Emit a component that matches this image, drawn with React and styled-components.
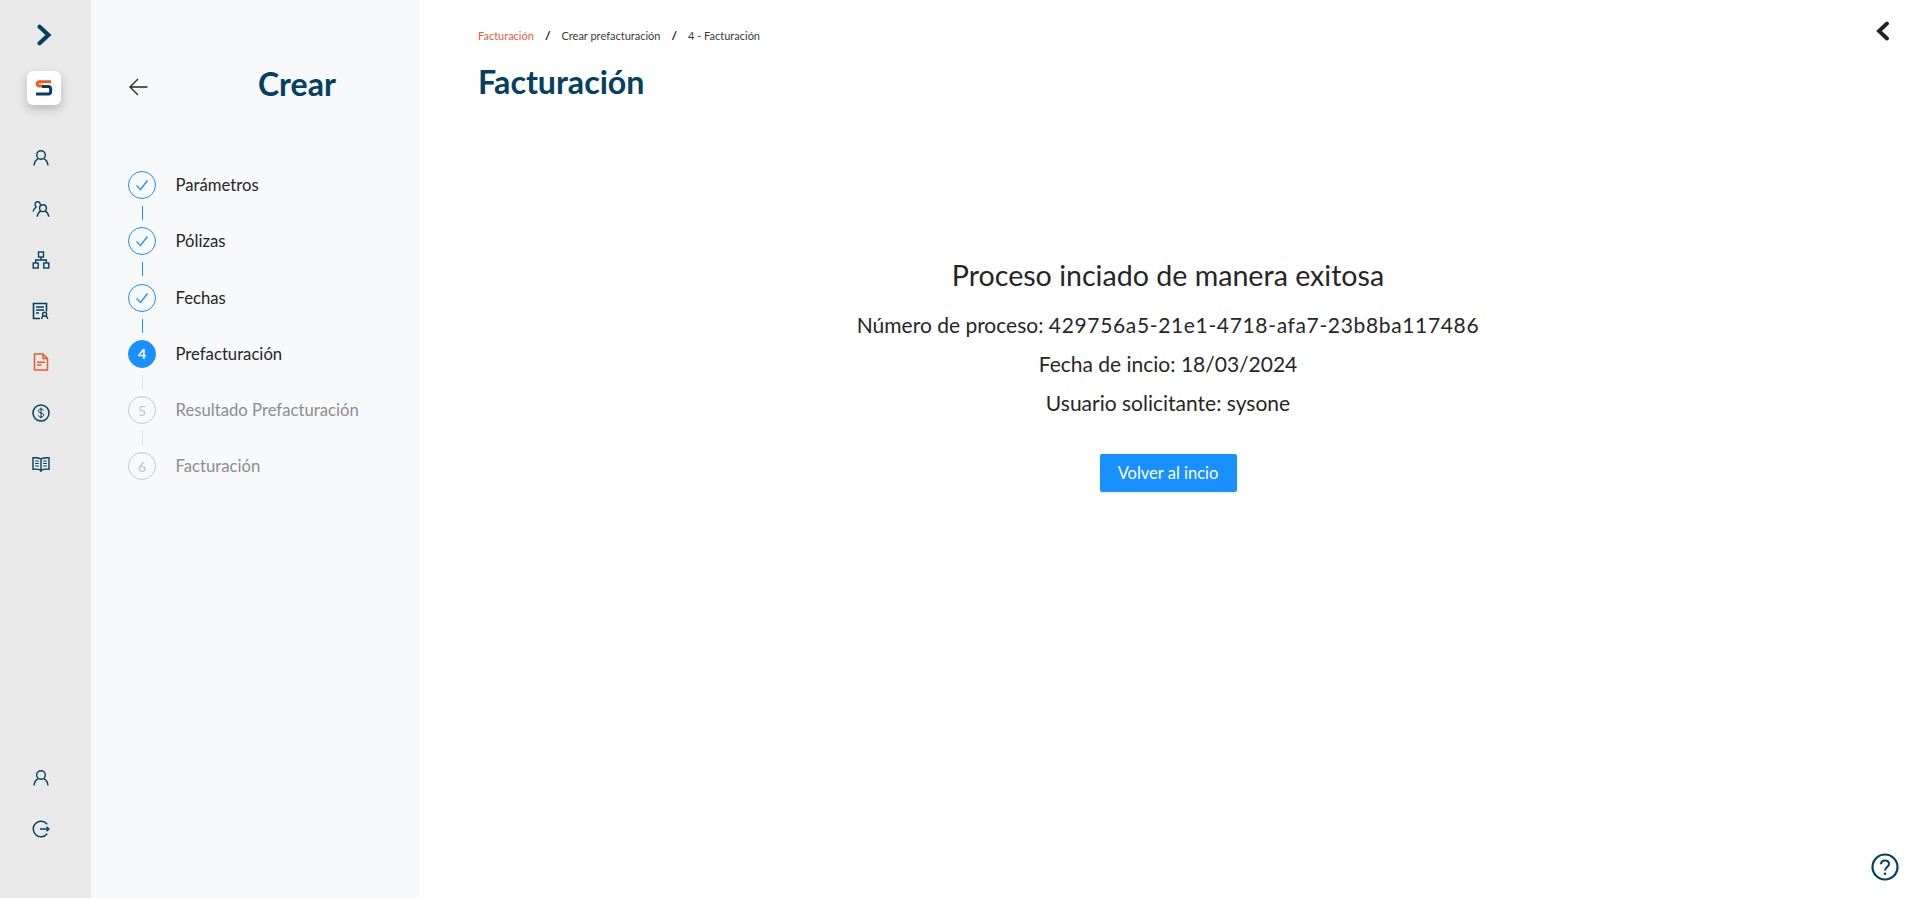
import React from 'react';
import styled, { createGlobalStyle } from 'styled-components';

const navy = '#04405f';
const blue = '#1890ff';

const GlobalStyle = createGlobalStyle`
  html, body {
    margin: 0;
    height: 100%;
    background: #fff;
    font-family: "Lato", "Open Sans", sans-serif;
    overflow: hidden;
  }
  #root {
    height: 100%;
  }
`;

const Icon = ({ children, size = 18, color = navy, sw = 1.4, vb = 18 }) => (
  <svg width={size} height={size} viewBox={`0 0 ${vb} ${vb}`} fill="none" stroke={color} strokeWidth={sw}>
    {children}
  </svg>
);

const UserIcon = () => (
  <Icon>
    <circle cx="9" cy="6" r="4.3" />
    <path d="M2 16.5C2.4 12.8 4.6 10.4 6.2 9.6M16 16.5C15.6 12.8 13.4 10.4 11.8 9.6" />
  </Icon>
);

const TeamIcon = () => (
  <Icon>
    <circle cx="11" cy="8.2" r="3.4" />
    <path d="M5.2 16.7c.3-2.8 2-4.8 3.5-5.6M16.8 16.7c-.3-2.8-2-4.8-3.5-5.6" />
    <path d="M8.5 4.6C8 2.7 6.6 1.6 5.2 1.8 3.4 2 2.6 3.8 3.2 5.6c.2.6.6 1 1 1.4C2.8 8 1.6 9.8 1 11.4" />
  </Icon>
);

const TreeIcon = () => (
  <Icon>
    <rect x="6.5" y="1" width="5" height="5" />
    <rect x="1.2" y="12" width="5" height="5" />
    <rect x="11.8" y="12" width="5" height="5" />
    <path d="M9 6v3M3.7 12V9h10.6v3" />
  </Icon>
);

const ReportIcon = () => (
  <Icon>
    <path d="M8 16.5H1.5v-15h13v8" strokeWidth="1.6" />
    <path d="M4 5h8M4 8h8M4 11h3" />
    <circle cx="12.6" cy="12.2" r="2" />
    <path d="M9.5 17c.2-1.6 1-2.6 1.8-3.1M15.7 17c-.2-1.6-1-2.6-1.8-3.1" />
  </Icon>
);

const DocIcon = () => (
  <Icon color="#e9592c" sw={1.5}>
    <path d="M2.5 1h8.5l4.5 4.5V17h-13z" />
    <path d="M11 1v4.5h4.5" />
    <path d="M5 9.2h8M5 12h4.5" />
  </Icon>
);

const DollarIcon = () => (
  <Icon>
    <circle cx="9" cy="9" r="8" strokeWidth="1.5" />
    <path d="M11.6 6.5C11.2 5.4 10.2 5 9 5 7.5 5 6.5 5.8 6.5 7c0 2.8 5.2 1.2 5.2 4 0 1.2-1.1 2-2.7 2-1.3 0-2.3-.5-2.7-1.6M9 3.5v11" strokeWidth="1" />
  </Icon>
);

const BookIcon = () => (
  <Icon>
    <path d="M9 4C7 2.8 4 2.6 1 2.8v11.4c3-.2 6 0 8 1.3 2-1.3 5-1.500 8-1.300V2.800C14 2.600 11 2.800 9 4zM9 4v13" />
    <path d="M3.200 6h3.600M3.200 8.500h3.600M3.200 11h3.600M11.200 6h3.600M11.200 8.500h3.600M11.200 11h3.600" strokeWidth="1" />
  </Icon>
);

const LogoutIcon = () => (
  <Icon>
    <path d="M15.200 4.200A7.800 7.800 0 1 0 15.200 13.800" strokeWidth="1.500" />
    <path d="M8 9h9M14.500 6.800 17 9l-2.500 2.200" />
  </Icon>
);

const Chevron = ({ dir, color, size }) => (
  <svg width={size} height={size} viewBox="0 0 20 20" fill="none" stroke={color} strokeWidth="3.800" strokeLinecap="round">
    <path d={dir === 'right' ? 'M6 2.500 14 10 6 17.500' : 'M14 2.500 6 10 14 17.500'} />
  </svg>
);

const Check = () => (
  <svg width="14" height="14" viewBox="0 0 14 14" fill="none" stroke={blue} strokeWidth="1.300">
    <path d="M1.500 7.500 5.500 11.500 12.500 2.500" />
  </svg>
);

const Page = styled.div`
  display: flex;
  height: 898px;
  position: relative;
`;

const Rail = styled.nav`
  width: 91px;
  flex: none;
  background: #e9e9e9;
  display: flex;
  flex-direction: column;
  align-items: center;
  box-sizing: border-box;
  padding: 24px 0 60px;
`;

const RailToggle = styled.div`
  height: 22px;
  display: flex;
  margin-left: -3px;
`;

const LogoBox = styled.div`
  width: 34px;
  height: 34px;
  margin: 25px 0 0 -3px;
  border-radius: 6px;
  background: #fff;
  box-shadow: 0 4px 10px rgba(0, 0, 0, 0.22);
  display: flex;
  align-items: center;
  justify-content: center;
`;

const RailGroup = styled.div`
  display: flex;
  flex-direction: column;
  gap: 33px;
  margin: ${(p) => (p.$bottom ? 'auto 0 0' : '44px 0 0')};
  margin-left: -9px;
  & > svg {
    display: block;
  }
`;

const Side = styled.aside`
  width: 328px;
  flex: none;
  background: #f7f9fb;
  box-sizing: border-box;
  padding: 66px 0 0 37px;
`;

const SideHead = styled.div`
  display: flex;
  align-items: center;
  height: 34px;
`;

const BackArrow = styled.div`
  width: 130px;
  display: flex;
  align-items: center;
  padding: 8px 0 0 1px;
  box-sizing: border-box;
`;

const SideTitle = styled.h2`
  margin: 0;
  font-size: 32px;
  font-weight: 700;
  color: ${navy};
`;

const Steps = styled.ol`
  list-style: none;
  margin: 71px 0 0;
  padding: 0;
`;

const Step = styled.li`
  display: flex;
  align-items: center;
  gap: 19.500px;
  height: 28px;
  position: relative;
  margin-bottom: 28.3px;
  font-size: 16.700px;
  color: ${(p) => (p.$state === 'todo' ? '#8e8e8e' : '#262626')};
  &:not(:last-child)::after {
    content: '';
    position: absolute;
    left: 13.500px;
    top: 35px;
    width: 1px;
    height: 14px;
    background: ${(p) => (p.$state === 'done' ? blue : '#e2e2e2')};
  }
`;

const StepMark = styled.span`
  width: 28px;
  height: 28px;
  box-sizing: border-box;
  flex: none;
  border-radius: 50%;
  display: flex;
  align-items: center;
  justify-content: center;
  font-size: 14px;
  font-weight: ${(p) => (p.$state === 'active' ? 700 : 400)};
  background: ${(p) => (p.$state === 'active' ? blue : 'transparent')};
  color: ${(p) => (p.$state === 'active' ? '#fff' : '#c4c4c4')};
  border: 1px solid ${(p) => (p.$state === 'todo' ? '#c8c8c8' : blue)};
`;

const Main = styled.main`
  flex: 1;
  min-width: 0;
  padding: 28px 0 0 59px;
  box-sizing: border-box;
`;

const Crumbs = styled.div`
  display: flex;
  align-items: center;
  height: 14px;
  font-size: 11px;
  color: #3a3a3a;
`;

const Crumb = styled.span`
  color: ${(p) => (p.$first ? '#f0583a' : 'inherit')};
`;

const CrumbSep = styled.span`
  margin: 0 11px;
  color: #111;
  font-size: 12px;
  font-weight: 700;
`;

const Heading = styled.h1`
  margin: 15px 0 0;
  font-size: 32.200px;
  line-height: 50px;
  font-weight: 700;
  color: ${navy};
`;

const Result = styled.section`
  margin: 148px 0 0 -59px;
  display: flex;
  flex-direction: column;
  align-items: center;
  color: #262626;
`;

const ResultTitle = styled.h3`
  margin: 0 0 10px;
  font-size: 28.600px;
  line-height: 40px;
  font-weight: 400;
`;

const ResultLine = styled.p`
  margin: 0;
  font-size: 21px;
  line-height: 39px;
`;

const ProcessId = styled.span`
  letter-spacing: 0.65px;
`;

const Button = styled.button`
  margin-top: 32px;
  width: 137px;
  height: 38px;
  border: none;
  border-radius: 2px;
  background: ${blue};
  color: #fff;
  font: inherit;
  font-size: 16.500px;
  box-shadow: 0 2px 0 rgba(0, 0, 0, 0.05);
`;

const Collapse = styled.div`
  position: absolute;
  top: 21px;
  right: 24px;
  display: flex;
`;

const Help = styled.div`
  position: absolute;
  right: 18px;
  bottom: 17px;
  display: flex;
`;

const steps = [
  { label: 'Parámetros', state: 'done' },
  { label: 'Pólizas', state: 'done' },
  { label: 'Fechas', state: 'done' },
  { label: 'Prefacturación', state: 'active', n: 4 },
  { label: 'Resultado Prefacturación', state: 'todo', n: 5 },
  { label: 'Facturación', state: 'todo', n: 6 },
];

const App = () => (
  <>
    <GlobalStyle />
    <Page>
      <Rail>
        <RailToggle>
          <Chevron dir="right" color={navy} size={22} />
        </RailToggle>
        <LogoBox>
          <svg width="18" height="16" viewBox="0 0 18 16" fill="none" strokeWidth="3">
            <path d="M16 1.700H4.500C1.500 1.700 1.500 6 4.500 6H8" stroke="#ee5a1f" />
            <path d="M7 6.500h6.500c3 0 3 7.500 0 7.500H1" stroke={navy} />
          </svg>
        </LogoBox>
        <RailGroup>
          <UserIcon />
          <TeamIcon />
          <TreeIcon />
          <ReportIcon />
          <DocIcon />
          <DollarIcon />
          <BookIcon />
        </RailGroup>
        <RailGroup $bottom>
          <UserIcon />
          <LogoutIcon />
        </RailGroup>
      </Rail>
      <Side>
        <SideHead>
          <BackArrow>
            <svg width="19" height="18" viewBox="0 0 19 18" fill="none" stroke="#262626" strokeWidth="1.300">
              <path d="M18.500 9H1M9 1 1 9l8 8" />
            </svg>
          </BackArrow>
          <SideTitle>Crear</SideTitle>
        </SideHead>
        <Steps>
          {steps.map((s) => (
            <Step key={s.label} $state={s.state}>
              <StepMark $state={s.state}>{s.state === 'done' ? <Check /> : s.n}</StepMark>
              {s.label}
            </Step>
          ))}
        </Steps>
      </Side>
      <Main>
        <Crumbs>
          <Crumb $first>Facturación</Crumb>
          <CrumbSep>/</CrumbSep>
          <Crumb>Crear prefacturación</Crumb>
          <CrumbSep>/</CrumbSep>
          <Crumb>4 - Facturación</Crumb>
        </Crumbs>
        <Heading>Facturación</Heading>
        <Result>
          <ResultTitle>Proceso inciado de manera exitosa</ResultTitle>
          <ResultLine>Número de proceso: <ProcessId>429756a5-21e1-4718-afa7-23b8ba117486</ProcessId></ResultLine>
          <ResultLine>Fecha de incio: 18/03/2024</ResultLine>
          <ResultLine>Usuario solicitante: sysone</ResultLine>
          <Button>Volver al incio</Button>
        </Result>
      </Main>
      <Collapse>
        <Chevron dir="left" color="#222" size={20} />
      </Collapse>
      <Help>
        <svg width="28" height="28" viewBox="0 0 28 28" fill="none" stroke={navy} strokeWidth="2.200">
          <circle cx="14" cy="14" r="12.500" />
          <path d="M10 11.200C10 8.800 11.800 7.500 14 7.500s4 1.300 4 3.500c0 3-4 3-4 6.500" strokeWidth="2" />
          <circle cx="14" cy="20.800" r="1.300" fill={navy} stroke="none" />
        </svg>
      </Help>
    </Page>
  </>
);

export default App;
